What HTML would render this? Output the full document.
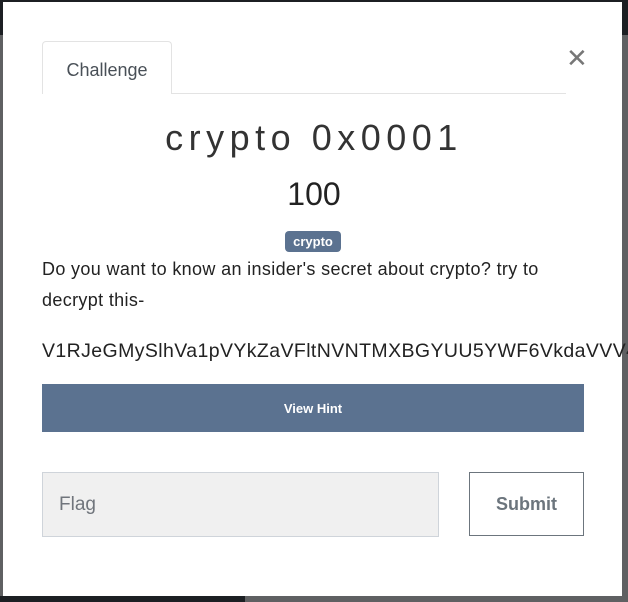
<!DOCTYPE html>
<html><head><style>
body{margin:0;width:628px;height:602px;overflow:hidden;position:relative;background:#5f6062;font-family:"Liberation Sans",sans-serif;}
.top{position:absolute;left:0;top:0;width:628px;height:35px;background:#1c1f23}
.bot{position:absolute;left:0;top:596px;width:245px;height:6px;background:#1c1f23}
.m{position:absolute;left:3px;top:2px;width:619px;height:594px;background:#fff}
.tab{position:absolute;left:42px;top:41px;width:128px;height:52px;border:1px solid #e3e3e3;border-bottom:none;border-radius:4px 4px 0 0;background:#fff;color:#495057;font-size:18px;line-height:56px;text-align:center;z-index:2}
.tl{position:absolute;left:42px;top:93px;width:524px;height:1px;background:#e3e3e3}
.x{position:absolute;left:566px;top:43px;font-size:26px;color:#777}
.h{position:absolute;left:0;width:628px;text-align:center;color:#222}
.badge{position:absolute;left:285px;top:231px;width:56px;height:21px;background:#5b7290;color:#fff;border-radius:4px;font-size:13px;font-weight:bold;text-align:center;line-height:21px}
.p{position:absolute;left:42px;font-size:18px;letter-spacing:0.35px;color:#222;white-space:nowrap}
.hint{position:absolute;left:42px;top:384px;width:542px;height:48px;background:#5b7290;color:#fff;font-size:13px;font-weight:bold;text-align:center;line-height:49px}
.flag{position:absolute;left:42px;top:472px;background:#f0f0f0;border:1px solid #cfd4da;color:#70757c;font-size:19px;line-height:63px;padding-left:16px;box-sizing:border-box;width:397px;height:65px}
.sub{position:absolute;left:469px;top:472px;width:115px;height:64px;border:1px solid #6c757d;box-sizing:border-box;color:#6c757d;font-weight:bold;font-size:18px;text-align:center;line-height:62px}
</style></head><body>
<div class="top"></div><div class="bot"></div>
<div class="m"></div>
<div class="tab">Challenge</div><div class="tl"></div>
<div class="x">✕</div>
<div class="h" style="top:117px;font-size:36px;letter-spacing:5.5px;color:#333">crypto 0x0001</div>
<div class="h" style="top:176px;font-size:32px">100</div>
<div class="badge">crypto</div>
<div class="p" style="top:259px">Do you want to know an insider's secret about crypto? try to</div>
<div class="p" style="top:290px">decrypt this-</div>
<div class="p" style="top:340px;font-size:19.5px;letter-spacing:0.4px">V1RJeGMySlhVa1pVYkZaVFltNVNTMXBGYUU5YWF6VkdaVVV4</div>
<div class="hint">View Hint</div>
<div class="flag">Flag</div>
<div class="sub">Submit</div>
</body></html>
